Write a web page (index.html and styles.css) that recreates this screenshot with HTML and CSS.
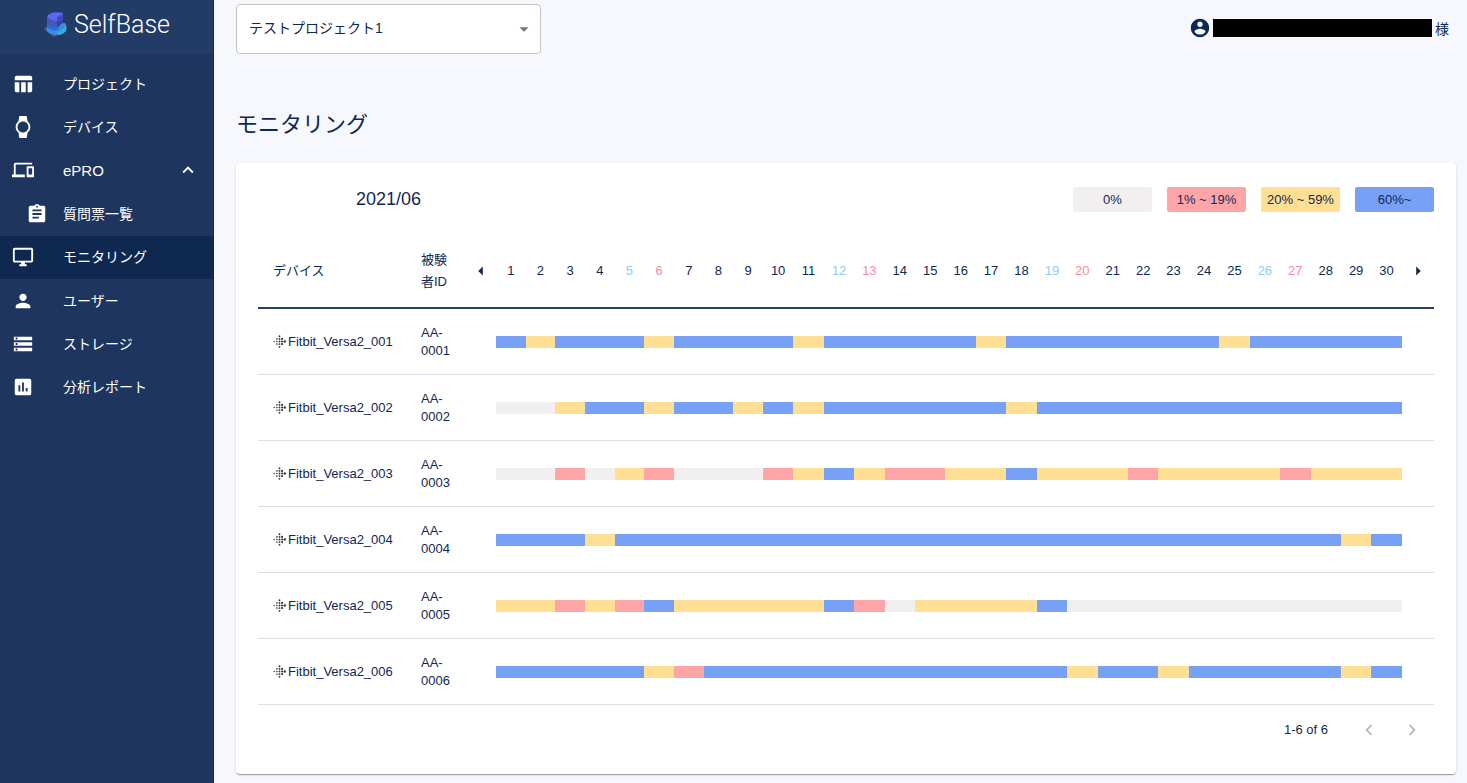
FILE: index.html
```html
<!DOCTYPE html>
<html lang="ja">
<head>
<meta charset="utf-8">
<title>SelfBase</title>
<link rel="stylesheet" href="styles.css">
</head>
<body>
<div class="app">
  <aside class="sidebar">
    <a class="brand" href="#">
      <svg class="brand-mark" viewBox="0 0 32 32" aria-hidden="true">
        <path d="M4 21 8 18 20 26 14 29Z" fill="#6f7890" opacity=".6"/>
        <path d="M7 15h11v12c-4 0-9-1-11-4Z" fill="#3b8cee"/>
        <path d="M7 14c3 3 7 3 11 3v5c-4 1-9 0-11-3Z" fill="#1f74dc"/>
        <path d="M7 9c2 3 6 4 10 4v6c-4 0-8 0-10-3Z" fill="#4a55b8"/>
        <path d="M17 13c3 0 5-2 6-4v6c-3 1-5 2-6 4Z" fill="#3344a8"/>
        <path d="M18 27v-6c1-4 4-6 7-6 2 3 2 8 0 9-2 2-4 3-7 3Z" fill="#38aede"/>
        <path d="M18 21c1-4 4-6 7-6 1 4-3 7-7 9Z" fill="#2f92dc"/>
        <path d="M7 9c1-4 8-6 16-4v4c-1 3-4 4-6 4-4 0-8-1-10-4Z" fill="#5a66f0"/>
        <path d="M17 13V9l6-3v3c-1 3-4 4-6 4Z" fill="#3e4cc0"/>
      </svg>
      <span>SelfBase</span>
    </a>
    <nav>
      <ul class="nav">
        <li><a class="nav-item" href="#"><svg class="icon" viewBox="0 0 24 24"><path d="M10 10.02h5V21h-5zM17 21h3c1.100 0 2-.9 2-2v-9h-5v11zm3-18H5c-1.100 0-2 .9-2 2v3h19V5c0-1.100-.9-2-2-2zM3 19c0 1.100.9 2 2 2h3V10H3v9z"/></svg><span>プロジェクト</span></a></li>
        <li><a class="nav-item" href="#"><svg class="icon" viewBox="0 0 24 24"><path d="M20 12c0-2.540-1.190-4.810-3.040-6.270L16 0H8l-.95 5.730C5.190 7.190 4 9.450 4 12s1.190 4.810 3.050 6.270L8 24h8l.96-5.730C18.810 16.810 20 14.540 20 12zM6 12c0-3.310 2.690-6 6-6s6 2.690 6 6-2.690 6-6 6-6-2.690-6-6z"/></svg><span>デバイス</span></a></li>
        <li><button class="nav-item latin" type="button" aria-expanded="true"><svg class="icon" viewBox="0 0 24 24"><path d="M4 6h18V4H4c-1.100 0-2 .9-2 2v11H0v3h14v-3H4V6zm19 2h-6c-.55 0-1 .45-1 1v10c0 .55.45 1 1 1h6c.55 0 1-.45 1-1V9c0-.55-.45-1-1-1zm-1 9h-4v-7h4v7z"/></svg><span>ePRO</span><svg class="icon expand" viewBox="0 0 24 24"><path d="M12 8l-6 6 1.410 1.410L12 10.830l4.590 4.580L18 14z"/></svg></button></li>
        <li><a class="nav-item nested" href="#"><svg class="icon" viewBox="0 0 24 24"><path d="M19 3h-4.180C14.400 1.840 13.300 1 12 1c-1.300 0-2.400.84-2.820 2H5c-1.100 0-2 .9-2 2v14c0 1.100.9 2 2 2h14c1.100 0 2-.9 2-2V5c0-1.100-.9-2-2-2zm-7 0c.55 0 1 .45 1 1s-.45 1-1 1-1-.45-1-1 .45-1 1-1zm2 14H7v-2h7v2zm3-4H7v-2h10v2zm0-4H7V7h10v2z"/></svg><span>質問票一覧</span></a></li>
        <li><a class="nav-item active" href="#" aria-current="page"><svg class="icon" viewBox="0 0 24 24"><path d="M21 2H3c-1.100 0-2 .9-2 2v12c0 1.100.9 2 2 2h7v2H8v2h8v-2h-2v-2h7c1.100 0 2-.9 2-2V4c0-1.100-.9-2-2-2zm0 14H3V4h18v12z"/></svg><span>モニタリング</span></a></li>
        <li><a class="nav-item" href="#"><svg class="icon" viewBox="0 0 24 24"><path d="M12 12c2.210 0 4-1.790 4-4s-1.790-4-4-4-4 1.790-4 4 1.790 4 4 4zm0 2c-2.670 0-8 1.340-8 4v2h16v-2c0-2.660-5.330-4-8-4z"/></svg><span>ユーザー</span></a></li>
        <li><a class="nav-item" href="#"><svg class="icon" viewBox="0 0 24 24"><path d="M2 20h20v-4H2v4zm2-3h2v2H4v-2zM2 4v4h20V4H2zm4 3H4V5h2v2zm-4 7h20v-4H2v4zm2-3h2v2H4v-2z"/></svg><span>ストレージ</span></a></li>
        <li><a class="nav-item" href="#"><svg class="icon" viewBox="0 0 24 24"><path d="M19 3H5c-1.100 0-2 .9-2 2v14c0 1.100.9 2 2 2h14c1.100 0 2-.9 2-2V5c0-1.100-.9-2-2-2zM9 17H7v-7h2v7zm4 0h-2V7h2v10zm4 0h-2v-4h2v4z"/></svg><span>分析レポート</span></a></li>
      </ul>
    </nav>
  </aside>

  <main class="main">
    <header class="topbar">
      <div class="project-picker">
        <select class="project-select" aria-label="プロジェクト">
          <option>テストプロジェクト1</option>
        </select>
        <svg class="picker-arrow" viewBox="0 0 24 24" aria-hidden="true"><path d="M7 10l5 5 5-5z"/></svg>
      </div>
      <div class="user">
        <svg class="user-icon" viewBox="0 0 24 24" aria-hidden="true"><path d="M12 2C6.480 2 2 6.480 2 12s4.480 10 10 10 10-4.480 10-10S17.520 2 12 2zm0 3c1.660 0 3 1.340 3 3s-1.340 3-3 3-3-1.340-3-3 1.340-3 3-3zm0 14.200c-2.500 0-4.710-1.280-6-3.220.03-1.990 4-3.080 6-3.080 1.990 0 5.970 1.090 6 3.080-1.290 1.940-3.500 3.220-6 3.220z"/></svg>
        <span class="user-name"></span>
        <span>様</span>
      </div>
    </header>

    <h1 class="title">モニタリング</h1>

    <section class="card">
      <div class="card-head">
        <h2 class="month">2021/06</h2>
        <ul class="legend">
          <li class="none">0%</li>
          <li class="low">1% ~ 19%</li>
          <li class="mid">20% ~ 59%</li>
          <li class="high">60%~</li>
        </ul>
      </div>

      <table class="monitor">
        <colgroup>
          <col class="col-device"><col class="col-subject"><col class="col-prev">
          <col class="col-early" span="9"><col class="col-late" span="21">
          <col class="col-next">
        </colgroup>
        <thead><tr id="days"></tr></thead>
        <tbody id="rows"></tbody>
      </table>

      <div class="pager">
        <span>1-6 of 6</span>
        <button class="page-button" type="button" aria-label="前のページ" disabled><svg class="page-icon" viewBox="0 0 24 24"><path d="M15.410 7.410L14 6l-6 6 6 6 1.410-1.410L10.830 12z"/></svg></button>
        <button class="page-button" type="button" aria-label="次のページ" disabled><svg class="page-icon" viewBox="0 0 24 24"><path d="M10 6L8.590 7.410 13.170 12l-4.580 4.590L10 18l6-6z"/></svg></button>
      </div>
    </section>
  </main>
</div>
<script src="monitor.js"></script>
</body>
</html>
```

FILE: styles.css
```css
* {
  box-sizing: border-box;
}

body {
  margin: 0;
  background: #f6f8fe;
  color: #0f2851;
  font-family: "Liberation Sans", "Noto Sans CJK JP", sans-serif;
  font-size: 14px;
}

button,
select {
  font: inherit;
  color: inherit;
}

ul {
  margin: 0;
  padding: 0;
  list-style: none;
}

a {
  color: inherit;
  text-decoration: none;
}

.app {
  display: flex;
  min-height: 100vh;
}

.sidebar {
  flex: none;
  width: 214px;
  background: #1e3560;
  border-right: 1px solid #0f2851;
  color: #fff;
}

.brand {
  display: flex;
  align-items: center;
  gap: 2px;
  height: 54px;
  padding: 0 0 6px 40px;
  background: #233b67;
  font-family: Roboto, sans-serif;
  font-size: 25px;
  font-weight: 300;
}

.brand-mark {
  width: 32px;
  height: 32px;
}

.nav {
  display: grid;
  grid-auto-rows: 1fr;
  min-height: 347px;
  margin-top: 8px;
}

.nav-item {
  display: flex;
  align-items: center;
  width: 100%;
  height: 100%;
  padding: 0 14px 0 12px;
  border: 0;
  background: none;
  text-align: left;
}

.nav-item span {
  padding-bottom: 2px;
}

.nav-item.latin {
  font-size: 15px;
}

.nav-item.latin span {
  padding-bottom: 0;
}

.nav-item .icon {
  flex: none;
  width: 22px;
  height: 22px;
  margin-right: 29px;
  fill: #fff;
}

.nav-item.nested {
  padding-left: 26px;
}

.nav-item.nested .icon {
  margin-right: 15px;
}

.nav-item .expand {
  margin: 0 0 0 auto;
}

.nav-item.active {
  background: #0f284f;
}

.main {
  flex: 1;
  min-width: 0;
  padding: 4px 11px 8px 22px;
}

.topbar {
  display: flex;
  align-items: center;
  justify-content: space-between;
}

.project-picker {
  position: relative;
  width: 305px;
}

.project-select {
  display: block;
  width: 100%;
  height: 50px;
  padding: 0 36px 2px 12px;
  appearance: none;
  border: 1px solid #c4c4c4;
  border-radius: 4px;
  background: #fff;
}

.picker-arrow {
  position: absolute;
  top: 14px;
  right: 6px;
  width: 22px;
  height: 22px;
  fill: #757575;
  pointer-events: none;
}

.user {
  display: flex;
  align-items: center;
  gap: 2px;
  padding: 0 7px 2px 0;
}

.user-icon {
  width: 22px;
  height: 22px;
  fill: #0f2851;
}

.user-name {
  width: 219px;
  height: 18px;
  margin-right: 1px;
  background: #000;
}

.title {
  margin: 54px 0 22px;
  font-size: 22px;
  font-weight: 400;
  line-height: 33px;
}

.card {
  padding: 24px 22px 23px;
  border-radius: 4px;
  background: #fff;
  box-shadow: 0 2px 1px -1px rgba(0, 0, 0, .2), 0 1px 1px rgba(0, 0, 0, .14), 0 1px 3px rgba(0, 0, 0, .12);
}

.card-head {
  display: flex;
  align-items: center;
  justify-content: space-between;
  padding-left: 98px;
}

.month {
  margin: 0;
  padding-bottom: 2px;
  font-size: 18px;
  font-weight: 400;
  line-height: 22px;
}

.legend {
  display: flex;
  gap: 15px;
  font-size: 13px;
  line-height: 25px;
  text-align: center;
}

.legend li {
  width: 79px;
  border-radius: 2px;
}

.none {
  background: #f1eff0;
}

.low {
  background: #ffa5a7;
}

.mid {
  background: #ffdf94;
}

.high {
  background: #76a1f6;
}

.monitor {
  width: 100%;
  margin-top: 23px;
  border-collapse: separate;
  border-spacing: 0;
  table-layout: fixed;
  font-size: 13px;
}

.col-device {
  width: 149px;
}

.col-subject {
  width: 58px;
}

.col-prev {
  width: 31px;
}

.col-early {
  width: 2.523%;
}

.col-late {
  width: 2.587%;
}

.monitor th,
.monitor td {
  padding: 0;
  font-weight: 400;
}

.monitor th {
  height: 74px;
  border-bottom: 2px solid #283f6a;
  line-height: 22px;
}

.monitor td {
  height: 66px;
  border-bottom: 1px solid #dedede;
  line-height: 18px;
}

.monitor .device {
  padding-left: 15px;
  text-align: left;
}

.monitor .subject {
  padding: 0 14px;
  text-align: left;
}

.device-label {
  display: flex;
  align-items: center;
  gap: 2px;
}

.device-icon {
  width: 13px;
  height: 13px;
  fill: #333;
}

.saturday {
  color: #90caf9;
}

.sunday {
  color: #f98ba0;
}

.bar {
  height: 12px;
}

.step {
  display: flex;
  align-items: center;
  justify-content: center;
  width: 100%;
  height: 22px;
  padding: 0;
  border: 0;
  background: none;
}

.step-icon {
  width: 22px;
  height: 22px;
  fill: #0f2851;
}

.pager {
  display: flex;
  align-items: center;
  justify-content: flex-end;
  padding: 3px 1px 0 0;
  font-size: 13px;
}

.pager span {
  margin-right: 19px;
}

.page-button {
  display: flex;
  align-items: center;
  justify-content: center;
  width: 43px;
  height: 43px;
  padding: 0;
  border: 0;
  background: none;
}

.page-icon {
  width: 22px;
  height: 22px;
  fill: #b8b8b8;
}
```

FILE: monitor.js
```js
const LEVELS = { g: "none", r: "low", y: "mid", b: "high" };

// One letter for each day of the month.
const DEVICES = [
  ["001", "bybbbybbbbybbbbbybbbbbbbybbbbb"],
  ["002", "ggybbybbybybbbbbbybbbbbbbbbbbb"],
  ["003", "ggrgyrgggrybyrryybyyyryyyyryyy"],
  ["004", "bbbybbbbbbbbbbbbbbbbbbbbbbbbyb"],
  ["005", "yyryrbyyyyybrgyyyybggggggggggg"],
  ["006", "bbbbbyrbbbbbbbbbbbbybbybbbbbyb"],
];

const DOTS = [
  [6.5, [1.2, 3.9, 6.5, 9.1, 11.8]],
  [3.9, [3.9, 6.5, 9.1]],
  [9.1, [3.9, 6.5, 9.1]],
  [1.2, [6.5]],
  [11.8, [6.5]],
];

const deviceIcon = `<svg class="device-icon" viewBox="0 0 13 13" aria-hidden="true">${DOTS.map(([y, xs]) =>
  xs.map((x) => `<circle cx="${x}" cy="${y}" r="${0.6 + x * 0.05}"/>`).join("")).join("")}</svg>`;

function step(label, path) {
  return `<th><button class="step" type="button" aria-label="${label}"><svg class="step-icon" viewBox="0 0 24 24"><path d="${path}"/></svg></button></th>`;
}

function dayClass(day) {
  if (day % 7 === 5) return "saturday";
  if (day % 7 === 6) return "sunday";
  return "weekday";
}

let head = '<th class="device">デバイス</th><th class="subject">被験者ID</th>';
head += step("前の月", "M14 7l-5 5 5 5z");
for (let day = 1; day <= 30; day += 1) {
  head += `<th class="${dayClass(day)}">${day}</th>`;
}
head += step("次の月", "M10 17l5-5-5-5z");
document.getElementById("days").innerHTML = head;

document.getElementById("rows").innerHTML = DEVICES.map(([id, days]) => {
  const cells = [...days].map((key) => `<td><div class="bar ${LEVELS[key]}"></div></td>`).join("");
  return `<tr><td class="device"><span class="device-label">${deviceIcon}<span>Fitbit_Versa2_${id}</span></span></td>`
    + `<td class="subject">AA-<br>0${id}</td><td></td>${cells}<td></td></tr>`;
}).join("");
```
